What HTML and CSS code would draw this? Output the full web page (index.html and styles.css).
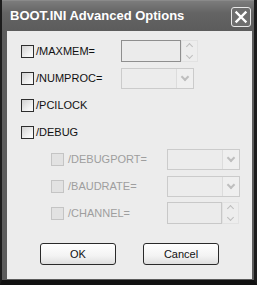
FILE: index.html
```html
<!DOCTYPE html>
<html lang="en">
<head>
    <meta charset="UTF-8">
    <meta name="viewport" content="width=device-width, initial-scale=1.0">
    <title>BOOT.INI Advanced Options</title>
    <link rel="stylesheet" href="styles.css">
</head>
<body>
    <div class="window">
        <div class="titlebar">
            <div class="title">BOOT.INI Advanced Options</div>
            <button class="close-button" aria-label="Close">
                <svg width="14" height="14" viewBox="0 0 14 14">
                    <path d="M2.5 2.5 L11.5 11.5 M11.5 2.5 L2.5 11.5" stroke="#fff" stroke-width="2.4" stroke-linecap="square"/>
                </svg>
            </button>
        </div>
        <div class="dialog-body">
            <div class="option-row">
                <span class="checkbox"></span>
                <span class="label">/MAXMEM=</span>
                <div class="spin">
                    <div class="spin-edit dark"></div>
                    <div class="spin-buttons">
                        <span class="spin-up"></span>
                        <span class="spin-down"></span>
                    </div>
                </div>
            </div>
            <div class="option-row">
                <span class="checkbox"></span>
                <span class="label">/NUMPROC=</span>
                <div class="combo">
                    <div class="combo-edit"></div>
                    <div class="combo-button"><span class="chevron"></span></div>
                </div>
            </div>
            <div class="option-row">
                <span class="checkbox"></span>
                <span class="label">/PCILOCK</span>
            </div>
            <div class="option-row">
                <span class="checkbox"></span>
                <span class="label">/DEBUG</span>
            </div>
            <div class="option-row sub disabled">
                <span class="checkbox"></span>
                <span class="label">/DEBUGPORT=</span>
                <div class="combo">
                    <div class="combo-edit"></div>
                    <div class="combo-button"><span class="chevron"></span></div>
                </div>
            </div>
            <div class="option-row sub disabled">
                <span class="checkbox"></span>
                <span class="label">/BAUDRATE=</span>
                <div class="combo">
                    <div class="combo-edit"></div>
                    <div class="combo-button"><span class="chevron"></span></div>
                </div>
            </div>
            <div class="option-row sub disabled">
                <span class="checkbox"></span>
                <span class="label">/CHANNEL=</span>
                <div class="spin">
                    <div class="spin-edit"></div>
                    <div class="spin-buttons">
                        <span class="spin-up"></span>
                        <span class="spin-down"></span>
                    </div>
                </div>
            </div>
            <div class="button-row">
                <button class="dialog-button">OK</button>
                <button class="dialog-button">Cancel</button>
            </div>
        </div>
    </div>
</body>
</html>
```

FILE: styles.css
```css
body {
    margin: 0;
    padding: 0;
    background-color: #111;
    font-family: "Liberation Sans", Arial, sans-serif;
}
.window {
    width: 257px;
    height: 285px;
    box-sizing: border-box;
    display: flex;
    flex-direction: column;
    background-color: #5c5c5c;
    border-left: 2px solid #1c1c1c;
    border-right: 3px solid #1c1c1c;
    border-bottom: 5px solid #111;
}
.titlebar {
    height: 31px;
    flex-shrink: 0;
    display: flex;
    align-items: center;
    justify-content: space-between;
    padding: 0 3px 0 8px;
    background: linear-gradient(#7c7c7c, #646464 40%, #5c5c5c);
    border-top: 1px solid #8a8a8a;
    box-sizing: border-box;
}
.title {
    color: #fff;
    font-weight: bold;
    font-size: 13px;
    margin-top: -1px;
}
.close-button {
    width: 20px;
    height: 20px;
    padding: 0;
    display: flex;
    align-items: center;
    justify-content: center;
    background: #6e6e6e;
    border: 1px solid #e8e8e8;
    border-radius: 3px;
    margin-top: 1px;
}
.dialog-body {
    flex: 1;
    margin: 0 2px 1px 5px;
    padding-top: 9px;
    background-color: #ececec;
    display: flex;
    flex-direction: column;
    gap: 5px;
}
.option-row {
    height: 22px;
    display: flex;
    align-items: center;
    padding-left: 14px;
    font-size: 11px;
    color: #111;
}
.option-row .label {
    width: 85px;
    margin-left: 2px;
}
.option-row.sub {
    padding-left: 44px;
}
.option-row.sub .label {
    width: 99px;
    margin-left: 4px;
}
.checkbox {
    width: 13px;
    height: 13px;
    box-sizing: border-box;
    border: 1px solid #2e2e2e;
    background: linear-gradient(135deg, #d2d2d2, #f4f4f4 70%, #fafafa);
}
.disabled .checkbox {
    border-color: #c4c4c4;
    background: #e2e2e2;
}
.disabled .label {
    color: #9e9e9e;
}
.spin {
    display: flex;
    height: 22px;
}
.spin-edit {
    width: 55px;
    box-sizing: border-box;
    border: 1px solid #c8c8c8;
    background: #ebebeb;
}
.spin-edit.dark {
    width: 60px;
    border-color: #8e8e8e;
}
.spin-buttons {
    width: 17px;
    display: flex;
    flex-direction: column;
    justify-content: center;
    align-items: center;
    gap: 4px;
    background: #ededed;
    border: 1px solid #e2e2e2;
    box-sizing: border-box;
}
.spin-up, .spin-down {
    width: 5px;
    height: 5px;
    box-sizing: border-box;
    border-left: 1px solid #bdbdbd;
    border-top: 1px solid #bdbdbd;
    transform: rotate(45deg);
}
.spin-up {
    margin-top: 2px;
}
.spin-down {
    transform: rotate(225deg);
    margin-bottom: 2px;
}
.combo {
    display: flex;
    width: 73px;
    height: 21px;
    box-sizing: border-box;
    border: 1px solid #cbcbcb;
    background: #ececec;
}
.combo-edit {
    flex: 1;
}
.combo-button {
    width: 16px;
    border-left: 1px solid #dcdcdc;
    display: flex;
    align-items: center;
    justify-content: center;
    background: #efefef;
}
.chevron {
    width: 6px;
    height: 6px;
    box-sizing: border-box;
    border-right: 2px solid #bebebe;
    border-bottom: 2px solid #bebebe;
    transform: rotate(45deg);
    margin-top: -3px;
}
.button-row {
    display: flex;
    justify-content: center;
    gap: 27px;
    margin-top: 14px;
}
.dialog-button {
    width: 76px;
    height: 22px;
    padding: 0;
    font-family: "Liberation Sans", Arial, sans-serif;
    font-size: 11px;
    color: #111;
    border: 1px solid #2a2a2a;
    border-radius: 3px;
    background: linear-gradient(#ffffff, #f3f3f3 60%, #dedede);
}
```
